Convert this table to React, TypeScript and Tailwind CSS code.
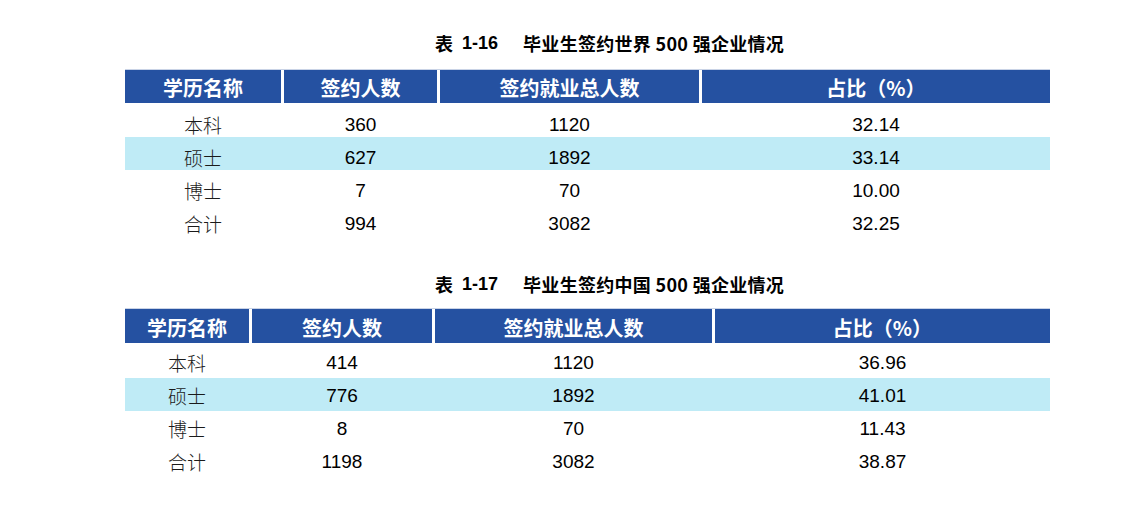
import React from "react";

type Row = [string, string, string, string];

const headers = ["学历名称", "签约人数", "签约就业总人数", "占比（%）"];

const table16: Row[] = [
  ["本科", "360", "1120", "32.14"],
  ["硕士", "627", "1892", "33.14"],
  ["博士", "7", "70", "10.00"],
  ["合计", "994", "3082", "32.25"],
];

const table17: Row[] = [
  ["本科", "414", "1120", "36.96"],
  ["硕士", "776", "1892", "41.01"],
  ["博士", "8", "70", "11.43"],
  ["合计", "1198", "3082", "38.87"],
];

const font = "font-['Liberation_Sans','Noto_Sans_CJK_SC',sans-serif]";

const DataTable = ({
  rows,
  cols,
  rowClass,
  headH,
  cjkPad,
  numPad,
}: {
  rows: Row[];
  cols: string;
  rowClass: string;
  headH: string;
  cjkPad: string;
  numPad: string;
}) => {
  return (
    <div className="w-[925px]">
      <div className={`grid gap-x-[3px] border-t border-t-[#c9d3e6] ${cols}`}>
        {headers.map((h) => (
          <div
            key={h}
            className={`bg-[#2551a1] ${headH} pt-[3px] flex items-center justify-center text-white font-bold text-[20px] font-['Noto_Sans_CJK_SC',sans-serif]`}
          >
            {h}
          </div>
        ))}
      </div>
      <div className={rowClass}>
        {rows.map((r, i) => (
          <div
            key={r[0]}
            className={`grid gap-x-[3px] h-[33px] ${cols} ${
              i === 1 ? "bg-[#bfebf6]" : "bg-white"
            }`}
          >
            <div
              className={`flex items-center justify-center ${cjkPad} text-[19px] text-[#1a1a1a] font-['Noto_Sans_CJK_SC',sans-serif] font-light`}
            >
              {r[0]}
            </div>
            {r.slice(1).map((v, j) => (
              <div
                key={j}
                className={`flex items-center justify-center ${numPad} text-[19px] text-black ${font}`}
              >
                {v}
              </div>
            ))}
          </div>
        ))}
      </div>
    </div>
  );
};

const Title = ({ num, text }: { num: string; text: string }) => (
  <div className="pl-[310px] text-[18px] font-bold text-black font-['Noto_Sans_CJK_SC',sans-serif] leading-[24px] flex">
    <span>表</span>
    <span className="ml-[9px] font-['Liberation_Sans',sans-serif]">{num}</span>
    <span className="ml-[25px] tracking-[0.3px]">{text}</span>
  </div>
);

export default function App() {
  return (
    <div className="w-[1142px] h-[507px] bg-white overflow-hidden">
      <div className="ml-[125px] pt-[31px]">
        <Title num="1-16" text="毕业生签约世界 500 强企业情况" />
        <div className="mt-[14px]">
          <DataTable
            rows={table16}
            cols="grid-cols-[156px_153px_259px_348px]"
            rowClass="pt-[1px]"
            headH="h-[33px]"
            cjkPad="pt-[7px]"
            numPad="pt-[6px]"
          />
        </div>
        <div className="mt-[36px]">
          <Title num="1-17" text="毕业生签约中国 500 强企业情况" />
        </div>
        <div className="mt-[12px]">
          <DataTable
            rows={table17}
            cols="grid-cols-[124px_180px_277px_335px]"
            rowClass="pt-[2px]"
            headH="h-[34px]"
            cjkPad="pt-[4px]"
            numPad="pt-[3px]"
          />
        </div>
      </div>
    </div>
  );
}
